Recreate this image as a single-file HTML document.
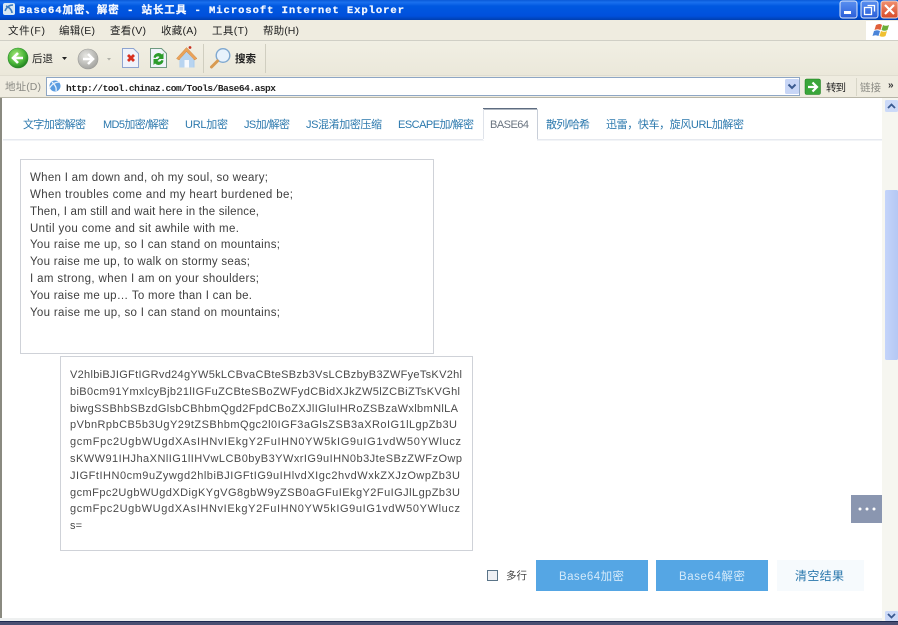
<!DOCTYPE html>
<html><head><meta charset="utf-8"><title>Base64加密、解密 - 站长工具</title>
<style>
html,body{margin:0;padding:0;background:#fff;width:898px;height:625px;overflow:hidden}
svg{display:block;position:absolute;left:0;top:0;filter:blur(.35px)}
text{font-family:"Liberation Sans","Noto Sans CJK SC",sans-serif;white-space:pre}
.m{font-size:10.5px;fill:#222}
.t{font-size:11px;fill:#2b78ad}
.p{font-size:11.5px;fill:#404040}
.b{font-size:11px;fill:#4a4a4a}
</style></head><body>
<svg width="898" height="625" viewBox="0 0 898 625" xmlns="http://www.w3.org/2000/svg">
<defs>
<linearGradient id="tb" x1="0" y1="0" x2="0" y2="1">
<stop offset="0" stop-color="#0a5ad8"/><stop offset=".12" stop-color="#1a70ee"/><stop offset=".3" stop-color="#0058e0"/><stop offset=".8" stop-color="#0050dc"/><stop offset="1" stop-color="#003fb0"/></linearGradient>
<linearGradient id="tool" x1="0" y1="0" x2="0" y2="1"><stop offset="0" stop-color="#f1efe4"/><stop offset="1" stop-color="#ebe8da"/></linearGradient>
<radialGradient id="grn" cx=".4" cy=".35" r=".7"><stop offset="0" stop-color="#a8e67a"/><stop offset=".6" stop-color="#4cb83a"/><stop offset="1" stop-color="#1c7a1c"/></radialGradient>
<radialGradient id="gry" cx=".4" cy=".35" r=".7"><stop offset="0" stop-color="#e8e8e4"/><stop offset="1" stop-color="#a0a09c"/></radialGradient>
<linearGradient id="red" x1="0" y1="0" x2="0" y2="1"><stop offset="0" stop-color="#f09070"/><stop offset="1" stop-color="#d84a28"/></linearGradient>
<linearGradient id="blu" x1="0" y1="0" x2="0" y2="1"><stop offset="0" stop-color="#5a90f0"/><stop offset="1" stop-color="#2a5ed8"/></linearGradient>
<linearGradient id="thumb" x1="0" y1="0" x2="1" y2="0"><stop offset="0" stop-color="#c4d4fa"/><stop offset="1" stop-color="#b4c8f4"/></linearGradient>
</defs>

<!-- title bar -->
<rect x="0" y="0" width="898" height="20" fill="url(#tb)"/>
<rect x="3" y="3" width="12" height="12" rx="2" fill="#d8e8f4"/>
<path d="M5 11c2-5 5-6 8-6M6 6c3 1 6 4 6 7" stroke="#3b7cc0" stroke-width="1.6" fill="none"/>
<text x="19" y="13" textLength="385" style="font-family:'Liberation Mono','Noto Sans CJK SC',monospace;font-size:10.5px;font-weight:bold;fill:#f4f8ff;stroke:#f4f8ff;stroke-width:.25">Base64加密、解密 - 站长工具 - Microsoft Internet Explorer</text>
<rect x="840" y="1" width="17" height="17" rx="2.5" fill="url(#blu)" stroke="#dfe8fa"/>
<rect x="844" y="11" width="7" height="3" fill="#fff"/>
<rect x="861" y="1" width="17" height="17" rx="2.5" fill="url(#blu)" stroke="#dfe8fa"/>
<rect x="864.5" y="7.5" width="7" height="7" fill="none" stroke="#fff" stroke-width="1.3"/>
<path d="M867.500 5.500h7v6" fill="none" stroke="#fff" stroke-width="1.300"/>
<rect x="881" y="1" width="17" height="17" rx="2.500" fill="url(#red)" stroke="#f0d8d0"/>
<path d="M885 5l9 9M894 5l-9 9" stroke="#fff" stroke-width="2.200"/>

<!-- menu bar -->
<rect x="0" y="20" width="898" height="21" fill="#efece0"/>
<rect x="0" y="40" width="898" height="1" fill="#d0cfc6"/>
<text class="m" x="8" y="34" textLength="37">文件(F)</text>
<text class="m" x="59" y="34" textLength="36">编辑(E)</text>
<text class="m" x="110" y="34" textLength="36">查看(V)</text>
<text class="m" x="161" y="34" textLength="36">收藏(A)</text>
<text class="m" x="212" y="34" textLength="36">工具(T)</text>
<text class="m" x="263" y="34" textLength="36">帮助(H)</text>
<rect x="866" y="21" width="32" height="19" fill="#fff"/>
<path d="M876 25q4-2 6 0l-1.500 5q-3-1.500-6 0z" fill="#e0603a"/>
<path d="M883 25q3 1.500 6 0l-1.500 5q-3 1.500-6 0z" fill="#6cae38"/>
<path d="M874 31q3-1.500 6 0l-1.500 5q-3-1.500-6 0z" fill="#4a84d8"/>
<path d="M881 31q3 1.500 6 0l-1.500 5q-3 1.500-6 0z" fill="#f0c030"/>

<!-- toolbar -->
<rect x="0" y="41" width="898" height="34" fill="url(#tool)"/>
<circle cx="18" cy="58" r="10" fill="url(#grn)" stroke="#2b8a2b" stroke-width=".6"/>
<path d="M23 58h-9M18 53l-5 5 5 5" stroke="#fff" stroke-width="2.600" fill="none"/>
<text class="m" x="32" y="62" textLength="21">后退</text>
<path d="M62 57h5l-2.500 3z" fill="#222"/>
<circle cx="88" cy="59" r="10" fill="url(#gry)" stroke="#9a9a96" stroke-width=".6"/>
<path d="M83 59h9M88 54l5 5-5 5" stroke="#fff" stroke-width="2.600" fill="none"/>
<path d="M107 58h4l-2 2.500z" fill="#b0b0a8"/>
<path d="M122.500 48.500h11l5 5v14h-16z" fill="#f0f3fb" stroke="#8ea4d0"/>
<path d="M128 55l6 6M134 55l-6 6" stroke="#d83020" stroke-width="2.800"/>
<path d="M150.500 48.500h11l5 5v14h-16z" fill="#f0f3fb" stroke="#6f9a80"/>
<path d="M153.500 57.500a5 5 0 0 1 8.500-3l1.500-1.500v6h-6l2-2a2.500 2.500 0 0 0-4 1z" fill="#2c9c2c"/>
<path d="M163.500 60.500a5 5 0 0 1-8.500 3l-1.500 1.500v-6h6l-2 2a2.500 2.500 0 0 0 4-1z" fill="#2c9c2c"/>
<path d="M186 48l11 10.500-2.500 1v8h-15v-8l-2.500-1z" fill="#a9cbee"/>
<path d="M176.500 58.500l10-11 10.500 11-2.500 1.500-8-8.500-7.500 8.500z" fill="#eaa25a" stroke="#d08a40" stroke-width=".5"/>
<path d="M180 59l6.500-7 7 7v8.500h-13.500z" fill="#b8d4f0"/>
<rect x="184.500" y="60" width="4.500" height="7.500" fill="#f6f9fd"/>
<circle cx="190" cy="47.500" r="1.400" fill="#c83020"/>
<rect x="203" y="44" width="1" height="29" fill="#d0cec0"/>
<circle cx="223" cy="55.500" r="6.800" fill="#e8f2fc" stroke="#7fa8d0" stroke-width="1.400"/>
<path d="M217.500 61l-6 6" stroke="#d89a50" stroke-width="3" stroke-linecap="round"/>
<text class="m" x="235" y="62" textLength="21" style="font-weight:bold">搜索</text>
<rect x="265" y="44" width="1" height="29" fill="#d0cec0"/>

<!-- address bar -->
<rect x="0" y="75" width="898" height="22" fill="#efece0"/>
<rect x="0" y="75" width="898" height="1" fill="#e0ddd0"/>
<text class="m" x="5" y="90" textLength="36" style="fill:#8a8a84">地址(D)</text>
<rect x="46.500" y="77.500" width="753" height="18" fill="#fff" stroke="#8ea6c4"/>
<circle cx="55" cy="86" r="5.500" fill="#5a9ce0"/>
<path d="M49 89c3-6 7-7 11-7M52 82c2 2 5 5 4 9" stroke="#e8f2fc" stroke-width="1.300" fill="none"/>
<text x="66" y="91" textLength="210" style="font-family:'Liberation Mono',monospace;font-size:9.500px;font-weight:bold;fill:#222">http://tool.chinaz.com/Tools/Base64.aspx</text>
<rect x="785" y="79" width="14" height="15" rx="1.500" fill="#c8d6f6"/>
<path d="M788.500 84.500l3.500 3.500 3.500-3.500" stroke="#3a5a90" stroke-width="2" fill="none"/>
<rect x="805" y="79" width="15.500" height="15.500" rx="1.500" fill="#3aa63a" stroke="#1c7a1c" stroke-width=".5"/>
<path d="M808 87h8M812.500 82.500l4.500 4.500-4.500 4.500" stroke="#fff" stroke-width="2.200" fill="none"/>
<text class="m" x="826" y="91" textLength="20">转到</text>
<rect x="856" y="78" width="1" height="18" fill="#d8d6c8"/>
<text class="m" x="860" y="91" textLength="21" style="fill:#8a8a84">链接</text>
<text x="888" y="88" style="font-size:10px;font-weight:bold;fill:#333">»</text>
<rect x="0" y="97" width="898" height="1" fill="#b8b6a8"/>

<!-- window edge -->
<rect x="0" y="98" width="2" height="523" fill="#8a8a80"/>

<!-- tabs -->
<rect x="3" y="139" width="879" height="1.500" fill="#e6e9ef"/>
<rect x="483" y="108" width="54" height="32" fill="#fff"/>
<rect x="483" y="108" width="54" height="1.500" fill="#5e6c80"/>
<rect x="483" y="109" width="1" height="30" fill="#dfe3ea"/>
<rect x="537" y="109" width="1" height="30" fill="#c8ced8"/>
<rect x="484" y="139" width="53" height="1.500" fill="#fff"/>
<text class="t" x="23" y="128" textLength="63">文字加密解密</text>
<text class="t" x="103" y="128" textLength="66">MD5加密/解密</text>
<text class="t" x="185" y="128" textLength="43">URL加密</text>
<text class="t" x="244" y="128" textLength="46">JS加/解密</text>
<text class="t" x="306" y="128" textLength="76">JS混淆加密压缩</text>
<text class="t" x="398" y="128" textLength="76">ESCAPE加/解密</text>
<text class="t" x="490" y="128" textLength="39" style="fill:#6a7480">BASE64</text>
<text class="t" x="546" y="128" textLength="44">散列/哈希</text>
<text class="t" x="606" y="128" textLength="138">迅雷，快车，旋风URL加解密</text>

<!-- textarea 1 -->
<rect x="20.500" y="159.500" width="413" height="194" fill="#fff" stroke="#cfd2d8"/>
<text class="p" x="30" y="181" textLength="238">When I am down and, oh my soul, so weary;</text>
<text class="p" x="30" y="198" textLength="263">When troubles come and my heart burdened be;</text>
<text class="p" x="30" y="215" textLength="229">Then, I am still and wait here in the silence,</text>
<text class="p" x="30" y="232" textLength="209">Until you come and sit awhile with me.</text>
<text class="p" x="30" y="248" textLength="250">You raise me up, so I can stand on mountains;</text>
<text class="p" x="30" y="265" textLength="220">You raise me up, to walk on stormy seas;</text>
<text class="p" x="30" y="282" textLength="229">I am strong, when I am on your shoulders;</text>
<text class="p" x="30" y="299" textLength="222">You raise me up… To more than I can be.</text>
<text class="p" x="30" y="316" textLength="250">You raise me up, so I can stand on mountains;</text>

<!-- textarea 2 -->
<rect x="60.500" y="356.500" width="412" height="194" fill="#fff" stroke="#cfd2d8"/>
<text class="b" x="70" y="378" textLength="392">V2hlbiBJIGFtIGRvd24gYW5kLCBvaCBteSBzb3VsLCBzbyB3ZWFyeTsKV2hl</text>
<text class="b" x="70" y="395" textLength="390">biB0cm91YmxlcyBjb21lIGFuZCBteSBoZWFydCBidXJkZW5lZCBiZTsKVGhl</text>
<text class="b" x="70" y="412" textLength="388">biwgSSBhbSBzdGlsbCBhbmQgd2FpdCBoZXJlIGluIHRoZSBzaWxlbmNlLA</text>
<text class="b" x="70" y="428" textLength="387">pVbnRpbCB5b3UgY29tZSBhbmQgc2l0IGF3aGlsZSB3aXRoIG1lLgpZb3U</text>
<text class="b" x="70" y="445" textLength="391">gcmFpc2UgbWUgdXAsIHNvIEkgY2FuIHN0YW5kIG9uIG1vdW50YWlucz</text>
<text class="b" x="70" y="462" textLength="392">sKWW91IHJhaXNlIG1lIHVwLCB0byB3YWxrIG9uIHN0b3JteSBzZWFzOwp</text>
<text class="b" x="70" y="479" textLength="390">JIGFtIHN0cm9uZywgd2hlbiBJIGFtIG9uIHlvdXIgc2hvdWxkZXJzOwpZb3U</text>
<text class="b" x="70" y="496" textLength="390">gcmFpc2UgbWUgdXDigKYgVG8gbW9yZSB0aGFuIEkgY2FuIGJlLgpZb3U</text>
<text class="b" x="70" y="512" textLength="390">gcmFpc2UgbWUgdXAsIHNvIEkgY2FuIHN0YW5kIG9uIG1vdW50YWlucz</text>
<text class="b" x="70" y="529" textLength="12">s=</text>

<!-- floating button -->
<rect x="851" y="495" width="31" height="28" fill="#8a96b0"/>
<circle cx="860" cy="509" r="1.500" fill="#fff"/><circle cx="867" cy="509" r="1.500" fill="#fff"/><circle cx="874" cy="509" r="1.500" fill="#fff"/>

<!-- controls -->
<rect x="487.500" y="570.500" width="10" height="10" fill="#eef0f4" stroke="#5a7488"/>
<text class="m" x="506" y="579" textLength="21" style="fill:#444">多行</text>
<rect x="536" y="560" width="112" height="31" fill="#55a6e4"/>
<text x="559" y="580" textLength="65" style="font-size:11.500px;fill:#d4eafa">Base64加密</text>
<rect x="656" y="560" width="112" height="31" fill="#55a6e4"/>
<text x="679" y="580" textLength="66" style="font-size:11.500px;fill:#d4eafa">Base64解密</text>
<rect x="777" y="560" width="87" height="31" fill="#f6fafd"/>
<text x="795" y="580" textLength="49" style="font-size:12px;fill:#2b78ad">清空结果</text>

<!-- scrollbar -->
<rect x="882" y="98" width="16" height="523" fill="#f6f6f0"/>
<rect x="885" y="100" width="13" height="12" rx="1.500" fill="#ccdaf8"/>
<path d="M888 108l3.500-3.500 3.500 3.500" stroke="#3a5a90" stroke-width="1.800" fill="none"/>
<rect x="885" y="190" width="13" height="170" rx="1.500" fill="url(#thumb)"/>
<rect x="885" y="611" width="13" height="10" rx="1.500" fill="#ccdaf8"/>
<path d="M888 614l3.500 3.500 3.500-3.500" stroke="#3a5a90" stroke-width="1.800" fill="none"/>

<!-- bottom edge -->
<rect x="0" y="618" width="882" height="3" fill="#eef0f0"/>
<rect x="0" y="621" width="898" height="1" fill="#1e2a50"/>
<rect x="0" y="622" width="898" height="3" fill="#4a4f72"/>
</svg>
</body></html>
